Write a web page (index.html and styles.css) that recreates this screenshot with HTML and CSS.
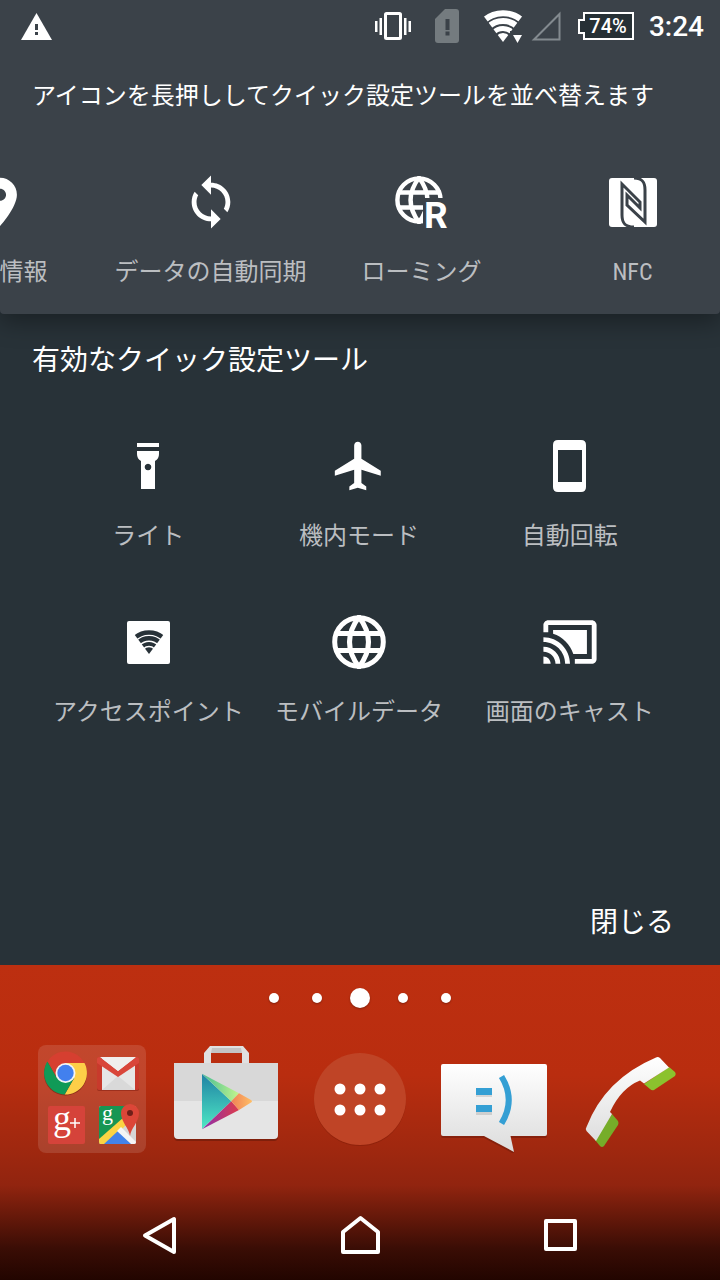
FILE: index.html
```
<!DOCTYPE html>
<html lang="ja">
<head>
  <meta charset="UTF-8">
  <meta name="viewport" content="width=device-width, initial-scale=1.0">
  <title>クイック設定ツール</title>
  <link rel="stylesheet" href="styles.css">
</head>
<body>
  <svg class="defs" aria-hidden="true">
    <symbol id="fan" viewBox="0 0 40 34">
      <clipPath id="fan-clip"><path d="M20 33L-1 5V0h42v5z"/></clipPath>
      <g clip-path="url(#fan-clip)" fill="none" stroke="currentColor">
        <circle cx="20" cy="33" r="28.8" stroke-width="6"/>
        <circle cx="20" cy="33" r="21" stroke-width="6"/>
        <circle cx="20" cy="33" r="13.5" stroke-width="5"/>
        <circle cx="20" cy="33" r="4.5" stroke-width="9"/>
      </g>
    </symbol>
    <symbol id="globe" viewBox="-27 -27 54 54">
      <g fill="none" stroke="currentColor" stroke-width="5">
        <circle r="24.3"/>
        <path d="M0-25Q-19 0 0 25Q19 0 0-25zM-24-8.500H24M-24 8.500H24"/>
      </g>
    </symbol>
  </svg>

  <div class="screen">
    <header class="top">
      <div class="status">
        <svg width="31" height="27" viewBox="0 0 31 27"><path d="M15.500 0L31 27H0z" fill="#fff"/><path d="M14 11h3v6h-3zM14 19h3v3h-3z" fill="#3b4249"/></svg>
        <div class="status-right">
          <div class="alerts">
            <svg width="36" height="28" viewBox="0 0 36 28"><rect x="10.500" y="1.500" width="15" height="25" rx="1" fill="none" stroke="#fff" stroke-width="3"/><path d="M0 9h2.500v11H0zM4.500 6H7v17H4.500zM33.500 9H36v11h-2.500zM29 6h2.500v17H29z" fill="#fff"/></svg>
            <svg width="24" height="34" viewBox="0 0 24 34"><path d="M10 0h11q3 0 3 3v28q0 3-3 3H3q-3 0-3-3V10z" fill="#747b7f"/><path d="M10.500 10h4v11h-4zM10.500 22.500h4v4h-4z" fill="#3b4249"/></svg>
            <div class="network">
              <svg width="40" height="34" viewBox="0 0 40 34"><use href="#fan" width="40" height="34"/><path d="M27 22h15v12H27z" fill="#3b4249"/><path d="M30 26h9l-4.500 8z" fill="#fff"/></svg>
              <svg width="30" height="30" viewBox="0 0 30 30"><path d="M28.500 3v25.500H3z" fill="none" stroke="#838a8f" stroke-width="2"/></svg>
            </div>
          </div>
          <div class="power">
            <svg width="56" height="28" viewBox="0 0 56 28"><path d="M6 1h49v26H6v-6H1V8h5z" fill="#263035" stroke="#fff" stroke-width="2"/><text class="charge" x="30" y="21" text-anchor="middle">74%</text></svg>
            <time class="clock">3:24</time>
          </div>
        </div>
      </div>
      <p class="hint">アイコンを長押ししてクイック設定ツールを並べ替えます</p>
      <div class="strip">
        <button class="tile">
          <svg class="tile-icon" viewBox="0 0 24 24"><path d="M12 2C8.130 2 5 5.130 5 9c0 5.250 7 13 7 13s7-7.750 7-13c0-3.870-3.130-7-7-7zm0 9.500c-1.380 0-2.500-1.120-2.500-2.500s1.120-2.500 2.500-2.500 2.500 1.120 2.500 2.500-1.120 2.500-2.500 2.500z"/></svg>
          <span>位置情報</span>
        </button>
        <button class="tile">
          <svg class="tile-icon" viewBox="0 0 24 24"><path d="M12 4V1L8 5l4 4V6c3.310 0 6 2.690 6 6 0 1.010-.25 1.970-.7 2.800l1.460 1.460C19.540 15.030 20 13.570 20 12c0-4.420-3.580-8-8-8zm0 14c-3.310 0-6-2.690-6-6 0-1.010.25-1.970.7-2.800L5.240 7.740C4.460 8.970 4 10.430 4 12c0 4.420 3.580 8 8 8v3l4-4-4-4v3z"/></svg>
          <span>データの自動同期</span>
        </button>
        <button class="tile">
          <svg class="tile-icon" viewBox="0 0 58 58">
            <clipPath id="roam-clip"><path d="M0 0h58v25H30v33H0z"/></clipPath>
            <g clip-path="url(#roam-clip)"><use href="#globe" x="2" y="3" width="48" height="48"/></g>
            <text class="roam" x="31" y="55">R</text>
          </svg>
          <span>ローミング</span>
        </button>
        <button class="tile">
          <svg class="tile-icon" viewBox="0 0 58 58">
            <rect x="5" y="5" width="48" height="49" rx="3"/>
            <path d="M30 54C20 54 18 49 18 42V11L36 29V35L23 22V32L41 49V17C41 10 39 5 30 5" fill="none" stroke="#3b4249" stroke-width="3"/>
          </svg>
          <span>NFC</span>
        </button>
      </div>
    </header>

    <main class="panel">
      <h1 class="title">有効なクイック設定ツール</h1>
      <div class="tiles">
        <button class="tile">
          <svg class="tile-icon" viewBox="0 0 58 58"><path fill-rule="evenodd" d="M18 6h22v4H18zM18 14h22v3q0 5-4 7v28H22V24q-4-2-4-7zM29 26.700a3.300 3.300 0 1 0 .01 0z"/></svg>
          <span>ライト</span>
        </button>
        <button class="tile">
          <svg class="tile-icon" viewBox="0 0 24 24"><path d="M21 16v-2l-8-5V3.500c0-.83-.67-1.500-1.500-1.500S10 2.670 10 3.500V9l-8 5v2l8-2.500V19l-2 1.500V22l3.500-1 3.500 1v-1.500L13 19v-5.500l8 2.500z"/></svg>
          <span>機内モード</span>
        </button>
        <button class="tile">
          <svg class="tile-icon" viewBox="0 0 58 58"><path fill-rule="evenodd" d="M17 3h23q5 0 5 5v42q0 5-5 5H17q-5 0-5-5V8q0-5 5-5zM17 13v32h24V13z"/></svg>
          <span>自動回転</span>
        </button>
        <button class="tile">
          <svg class="tile-icon" viewBox="0 0 58 58"><rect x="8" y="8" width="43" height="43" rx="2"/><use class="fan-dark" href="#fan" x="15" y="16" width="30" height="26"/></svg>
          <span>アクセスポイント</span>
        </button>
        <button class="tile">
          <svg class="tile-icon" viewBox="0 0 58 58"><use href="#globe" x="2" y="2" width="54" height="54"/></svg>
          <span>モバイルデータ</span>
        </button>
        <button class="tile">
          <svg class="tile-icon" viewBox="0 0 24 24"><path d="M1 18v3h3c0-1.660-1.340-3-3-3zm0-4v2c2.760 0 5 2.240 5 5h2c0-3.870-3.130-7-7-7zm18-7H5v1.630c3.960 1.280 7.090 4.410 8.370 8.370H19V7zM1 10v2c4.970 0 9 4.030 9 9h2c0-6.080-4.930-11-11-11zm20-7H3c-1.100 0-2 .9-2 2v3h2V5h18v14h-7v2h7c1.100 0 2-.9 2-2V5c0-1.100-.9-2-2-2z"/></svg>
          <span>画面のキャスト</span>
        </button>
      </div>
      <button class="close">閉じる</button>
    </main>

    <footer class="home">
      <div class="dots">
        <span class="dot"></span>
        <span class="dot"></span>
        <span class="dot current"></span>
        <span class="dot"></span>
        <span class="dot"></span>
      </div>
      <nav class="dock">
        <button class="app" aria-label="Google">
          <svg viewBox="0 0 108 108">
            <rect width="108" height="108" rx="8" fill="#fff" fill-opacity=".12"/>
            <!-- chrome -->
            <g transform="translate(27.500 28)">
              <circle r="21.500" cy="1" fill="#5c1608" fill-opacity=".5"/>
              <path d="M-18.160-11.450A21.500 21.500 0 0 1 19-10H0L-8.660 5z" fill="#d63f30"/>
              <path d="M19-10A21.500 21.500 0 0 1-.84 21.450L8.660 5 0-10z" fill="#fdcf48"/>
              <path d="M-.84 21.450A21.500 21.500 0 0 1-18.160-11.450L-8.660 5H8.660z" fill="#109a57"/>
              <circle r="10" fill="#f4f4f4"/>
              <circle r="8.200" fill="#4280ee"/>
            </g>
            <!-- gmail -->
            <rect x="59" y="13" width="42" height="33" rx="2" fill="#7d1c10" fill-opacity=".5"/>
            <rect x="59" y="12" width="42" height="33" rx="2" fill="#c83a2c"/>
            <path d="M64 12h33v33H64z" fill="#e6e6e6"/>
            <path d="M64 45l16-14 17 14z" fill="#d9d9d9"/>
            <path d="M59 14q0-2 3-2l18 14 18-14q3 0 3 2v4L80 32 59 18z" fill="#d9463a"/>
            <path d="M62 12h36L80 26z" fill="#f0efee"/>
            <!-- google+ -->
            <rect x="10" y="61" width="37" height="38" rx="2" fill="#d5433a"/>
            <text class="logo-g big" x="15" y="85">g</text>
            <path d="M37 73v10M32 78h10" stroke="#fff" stroke-width="1.500"/>
            <!-- maps -->
            <clipPath id="map-clip"><rect x="61" y="61" width="37" height="38" rx="2"/></clipPath>
            <g clip-path="url(#map-clip)">
              <path d="M61 61h37v38H61z" fill="#d6d6d6"/>
              <path d="M61 61h30v13L61 98z" fill="#169653"/>
              <path d="M61 99v-5l25-22 4 6-21 21z" fill="#fbd444"/>
              <path d="M66 99l15-14 14 14z" fill="#4283ea"/>
              <path d="M79 86l4-4 15 15v2h-5z" fill="#f5f5f5"/>
            </g>
            <text class="logo-g" x="64" y="75">g</text>
            <path d="M92 91c-1-8-9-14-9-23a9 9 0 0 1 18 0c0 9-8 15-9 23z" fill="#dc4638"/>
            <circle cx="92" cy="68" r="3" fill="#701f19"/>
          </svg>
        </button>
        <button class="app" aria-label="Play ストア">
          <svg viewBox="0 0 108 108">
            <defs>
              <linearGradient id="play-a" x1="0" y1="0" x2="0" y2="1"><stop offset="0" stop-color="#1f82a4"/><stop offset="1" stop-color="#4fe8c4"/></linearGradient>
              <linearGradient id="play-b"><stop offset="0" stop-color="#45bd93"/><stop offset="1" stop-color="#c3f58d"/></linearGradient>
              <linearGradient id="play-c"><stop offset="0" stop-color="#8c2fae"/><stop offset="1" stop-color="#dc3c4c"/></linearGradient>
              <linearGradient id="play-d"><stop offset="0" stop-color="#ef8055"/><stop offset="1" stop-color="#ffbf67"/></linearGradient>
            </defs>
            <path d="M2 20h104v72q0 4-4 4H6q-4 0-4-4z" fill="#5c1608" fill-opacity=".5"/>
            <path d="M38 1h33v7H38z" fill="#bdbdbd"/>
            <path d="M32 19V8l6-7h33l6 7v11h-7V8H39v11z" fill="#e0e0e0"/>
            <path d="M40 3h29l1 5H39z" fill="#c4c4c4"/>
            <path d="M2 18h104v38H2z" fill="#d8d8d8"/>
            <path d="M2 56h104v34q0 4-4 4H6q-4 0-4-4z" fill="#e5e5e5"/>
            <path d="M30 29l29.300 27.300L30 84z" fill="url(#play-a)"/>
            <path d="M30 28.700L67 48.300l-7.700 8z" fill="url(#play-b)"/>
            <path d="M30 84.300L67 65l-7.700-8.700z" fill="url(#play-c)"/>
            <path d="M67 48.300l12 6.700q2 1.300 0 2.600L67 65l-7.700-8.700z" fill="url(#play-d)"/>
          </svg>
        </button>
        <button class="app" aria-label="アプリ一覧">
          <svg viewBox="0 0 108 108">
            <circle cx="54" cy="55" r="46" fill="#7d1c08" fill-opacity=".5"/>
            <circle cx="54" cy="54" r="46" fill="#bf4426"/>
            <g fill="#fff">
              <circle cx="34" cy="44" r="5.500"/><circle cx="54" cy="44" r="5.500"/><circle cx="74" cy="44" r="5.500"/>
              <circle cx="34" cy="65" r="5.500"/><circle cx="54" cy="65" r="5.500"/><circle cx="74" cy="65" r="5.500"/>
            </g>
          </svg>
        </button>
        <button class="app" aria-label="メッセージ">
          <svg viewBox="0 0 108 108">
            <linearGradient id="msg" x1="0" y1="0" x2="0" y2="1"><stop offset="0" stop-color="#fff"/><stop offset="1" stop-color="#dcdcdc"/></linearGradient>
            <path d="M3 20h102q2 0 2 2v69q0 2-2 2H71l3 16-30-16H3q-2 0-2-2V22q0-2 2-2z" fill="#5c1608" fill-opacity=".4"/>
            <path d="M3 19h102q2 0 2 2v68q0 2-2 2H70.500l3.500 16-30-16H3q-2 0-2-2V21q0-2 2-2z" fill="url(#msg)"/>
            <path d="M36 45h16v7H36zM36 63h16v7H36z" fill="#000" fill-opacity=".12"/>
            <path d="M36 43h16v7H36zM36 60h16v7H36z" fill="#349fd4"/>
            <path d="M61.500 31.500Q76 55 61.500 78.500" fill="none" stroke="#349fd4" stroke-width="6"/>
          </svg>
        </button>
        <button class="app" aria-label="電話">
          <svg viewBox="0 0 108 108">
            <linearGradient id="phone" x1="0" y1="0" x2="0" y2="1"><stop offset="0" stop-color="#fff"/><stop offset="1" stop-color="#dedede"/></linearGradient>
            <path d="M95 22l6 5q1.500 2 0 4L80 45q-2 1-4-1l-6-5z" fill="#8bc22e"/>
            <path d="M38 69l6 7q1 2 0 4L30 101q-2 2-4 0l-5-6z" fill="#76ad29"/>
            <path d="M82 12.500q2-1 4 .5l9 9.500-25 16-4-3Q47 43 36 67l2 2-16 27-9.500-10q-1.500-2 0-4Q31 34 82 12.500z" fill="url(#phone)"/>
          </svg>
        </button>
      </nav>
      <nav class="navbar">
        <button class="nav-button" aria-label="戻る"><svg viewBox="0 0 48 48"><path d="M38 7v33L9 23.500z"/></svg></button>
        <button class="nav-button" aria-label="ホーム"><svg viewBox="0 0 48 48"><path d="M7 20L24.500 6 42 20v20H7z"/></svg></button>
        <button class="nav-button" aria-label="履歴"><svg viewBox="0 0 48 48"><path d="M10 9h29v28H10z"/></svg></button>
      </nav>
    </footer>
  </div>
</body>
</html>
```

FILE: styles.css
```
* {
  box-sizing: border-box;
}
body {
  margin: 0;
  background-color: #283238;
  color: white;
  font-family: Roboto, "Noto Sans CJK JP", sans-serif;
}
button {
  padding: 0;
  border: none;
  background: none;
  color: inherit;
  font: inherit;
  cursor: pointer;
}
svg {
  display: block;
}
.defs {
  position: absolute;
  width: 0;
  height: 0;
}
.screen {
  display: flex;
  flex-direction: column;
  min-height: 100vh;
  overflow: hidden;
}

/* top sheet */
.top {
  background-color: #3b4249;
  border-radius: 0 0 4px 4px;
  box-shadow: 0 8px 24px rgba(0, 0, 0, 0.35);
}
.status {
  display: flex;
  align-items: center;
  justify-content: space-between;
  height: 52px;
  padding: 0 16px 0 21px;
}
.status-right {
  display: flex;
  align-items: center;
  gap: 17px;
}
.alerts {
  display: flex;
  align-items: center;
  gap: 24px;
}
.network {
  display: flex;
  align-items: center;
  gap: 8px;
}
.power {
  display: flex;
  align-items: center;
  gap: 15px;
}
.charge {
  fill: white;
  font-size: 20px;
  font-weight: 500;
}
.clock {
  font-size: 28px;
  font-weight: 500;
}
.hint {
  margin: 0;
  padding: 30px 32px 25px;
  font-size: 24px;
  line-height: 28px;
}
.strip {
  display: flex;
  margin-left: -106px;
  padding: 38px 0 28px;
}
.strip .tile {
  flex: 0 0 211px;
}

/* tiles */
.tile {
  display: flex;
  flex-direction: column;
  align-items: center;
  gap: 27px;
  color: #bbbec1;
  font-family: "Roboto Condensed", "Liberation Sans Narrow", "Noto Sans CJK JP", sans-serif;
  font-size: 24px;
  line-height: 28px;
  white-space: nowrap;
}
.tile-icon {
  width: 58px;
  height: 58px;
  overflow: visible;
  color: white;
  fill: white;
}
.roam {
  font-family: Roboto, sans-serif;
  font-size: 37px;
  font-weight: 700;
}
.fan-dark {
  color: #283238;
}

/* active tools */
.panel {
  display: flex;
  flex: 1;
  flex-direction: column;
  padding: 27px 32px 22px;
}
.title {
  margin: 0;
  font-size: 28px;
  font-weight: 400;
  line-height: 40px;
}
.tiles {
  display: grid;
  grid-template-columns: repeat(3, 1fr);
  row-gap: 63px;
  padding: 56px 13px 0 11px;
}
.close {
  align-self: flex-end;
  margin-top: auto;
  padding: 0 14px;
  font-size: 28px;
  line-height: 40px;
}

/* home screen */
.home {
  background: linear-gradient(#bd2f10 0%, #b92d0f 35%, #a0280f 58%, #91240f 70%, #3a0d05 90%, #220500 100%);
}
.dots {
  display: flex;
  align-items: center;
  justify-content: center;
  gap: 33px;
  padding-top: 23px;
  height: 43px;
}
.dot {
  width: 10px;
  height: 10px;
  border-radius: 50%;
  background-color: white;
  box-shadow: 0 1px 2px rgba(0, 0, 0, 0.3);
}
.dot.current {
  width: 20px;
  height: 20px;
  margin: 0 -5px;
}
.dock {
  display: grid;
  grid-template-columns: repeat(5, 1fr);
  justify-items: center;
  padding: 37px 25px 39px;
}
.app {
  width: 108px;
}
.logo-g {
  fill: white;
  font-family: "Liberation Serif", serif;
  font-size: 22px;
}
.logo-g.big {
  font-size: 36px;
}
.navbar {
  display: grid;
  grid-template-columns: repeat(3, 1fr);
  justify-items: center;
  padding: 20px 60px;
}
.nav-button {
  width: 48px;
}
.nav-button path {
  fill: none;
  stroke: white;
  stroke-width: 4;
  stroke-linejoin: round;
}
```
